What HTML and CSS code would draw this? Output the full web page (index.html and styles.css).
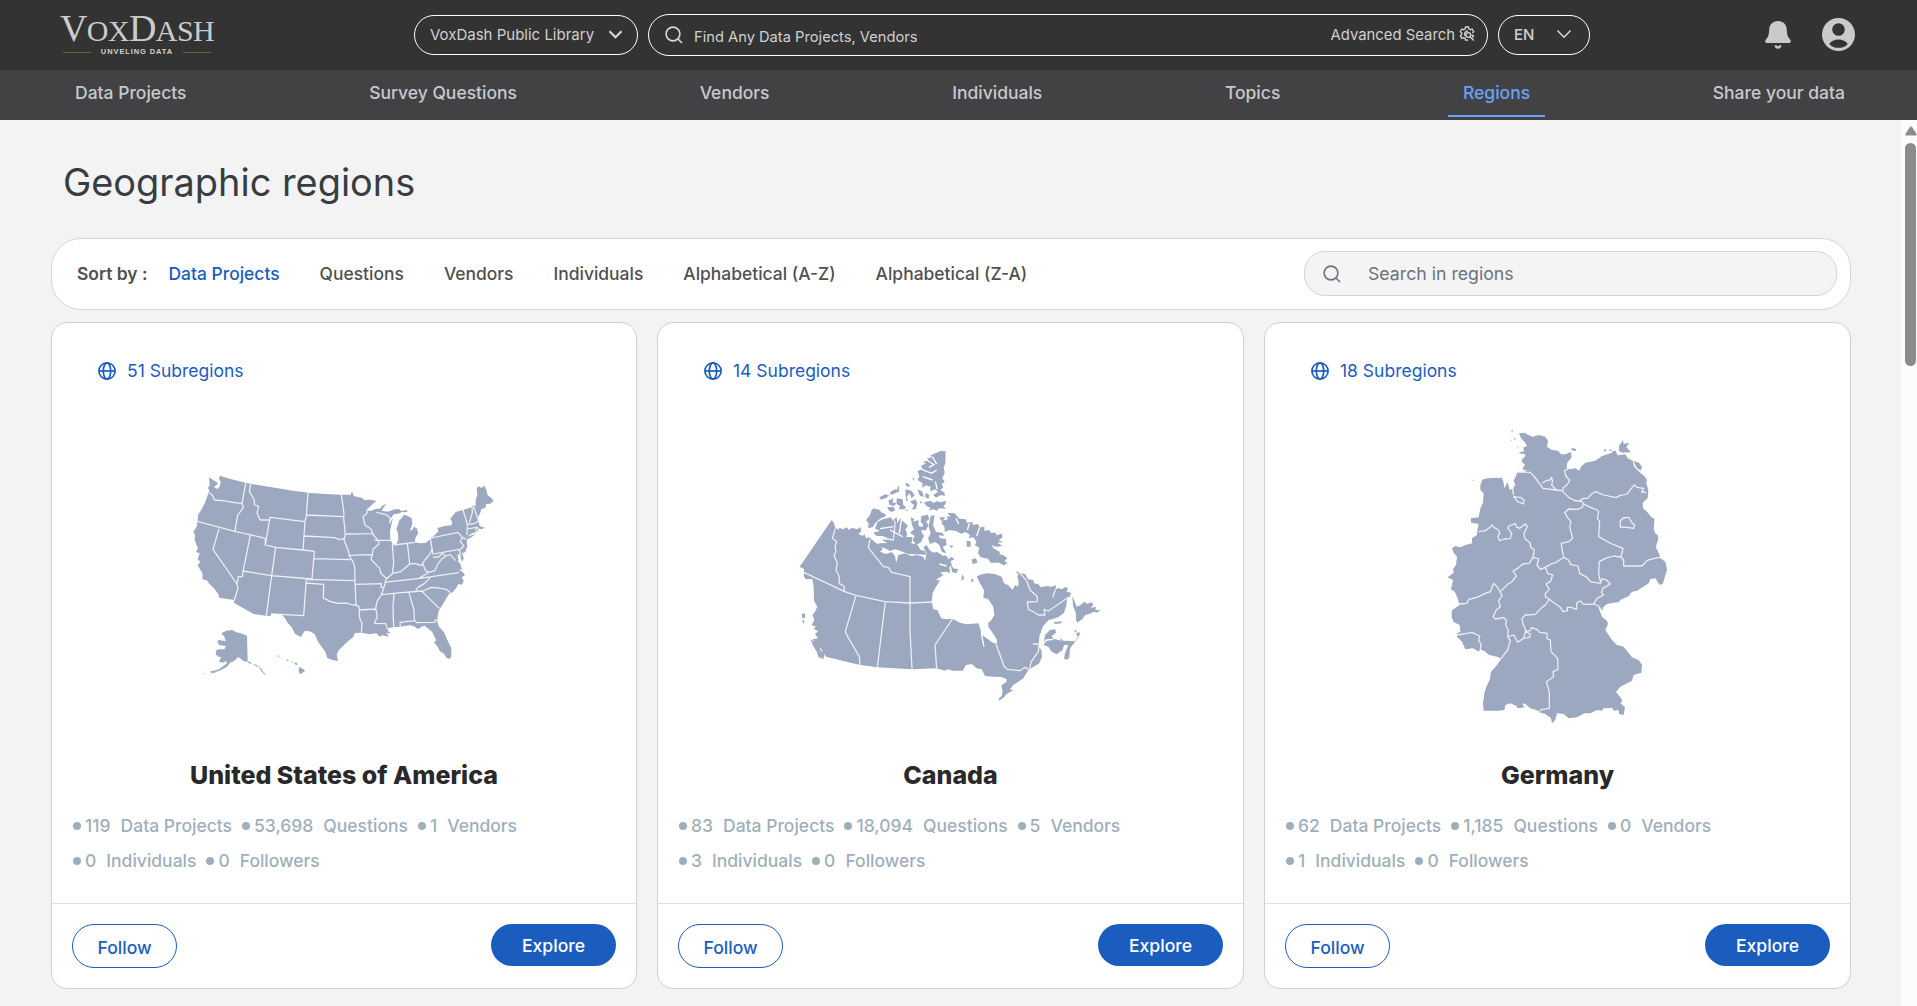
FILE: index.html
```html
<!DOCTYPE html>
<html lang="en">
<head>
<meta charset="utf-8">
<title>VoxDash - Geographic regions</title>
<link rel="stylesheet" href="styles.css">
</head>
<body>
<svg class="defs" width="0" height="0" aria-hidden="true">
  <symbol id="icon-search" viewBox="0 0 18 18"><circle cx="8" cy="8" r="6.9"/><path d="M13 13l4 4"/></symbol>
  <symbol id="icon-globe" viewBox="0 0 18 18"><circle cx="9" cy="9" r="8.1"/><ellipse cx="9" cy="9" rx="3.7" ry="8.1"/><path d="M1 9h16"/></symbol>
</svg>

<header class="topbar">
  <div class="logo">
    <div class="logo-name"><b>V</b>OX<b>D</b>ASH</div>
    <div class="logo-tag"><i></i><span>UNVELING DATA</span><i></i></div>
  </div>
  <div class="library-pill">
    <span>VoxDash Public Library</span>
    <svg width="15" height="9" viewBox="0 0 15 9"><path d="M1.5 1.2l6 6 6-6" stroke-width="2.1"/></svg>
  </div>
  <div class="search-pill">
    <svg class="search-icon" width="18" height="18"><use href="#icon-search"/></svg>
    <span class="placeholder">Find Any Data Projects, Vendors</span>
    <span class="advanced">Advanced Search</span>
    <svg class="gear" width="16" height="16" viewBox="0 0 16 16"><path d="M9.2 14.2L6.500 14.200 6.100 12.300 4.700 11.600 2.900 12.400 1.300 9.800 2.700 8.500V7L1.300 5.700 2.900 3 4.700 3.700 6.100 2.900 6.500 1h3l.4 1.900 1.400.8L13.100 3l1.600 2.700L13.400 7"/><circle cx="9.300" cy="9" r="2.300"/><path d="M11 10.700l3.800 3.800M6.600 10.200A2.600 2.600 0 0 1 6.300 6.300 2.600 2.600 0 0 1 9 5.300M12.500 8.800l2 1-1 2"/></svg>
  </div>
  <div class="lang-pill">
    <span>EN</span>
    <svg width="16" height="10" viewBox="0 0 16 10"><path d="M1.500 1.500l6.500 6.700 6.500-6.700" stroke-width="1.500"/></svg>
  </div>
  <div class="account">
    <svg width="26" height="28" viewBox="0 0 26 28"><path d="M13 0C7.600 0 4.400 3.600 4.200 8.500 4 13.500 3.400 15.800.9 18.600-.3 20 .3 22 2 22h22c1.700 0 2.300-2 1.100-3.400-2.500-2.800-3.100-5.100-3.300-10.100C21.600 3.600 18.400 0 13 0zM9.600 24.300h2a1.500 1.500 0 0 0 2.800 0h2a3.400 3.400 0 0 1-6.800 0z"/></svg>
    <svg width="33" height="33" viewBox="0 0 33 33"><path fill-rule="evenodd" d="M16.500 0a16.500 16.500 0 1 1 0 33 16.500 16.500 0 0 1 0-33zm0 5.200a6.300 6.300 0 1 0 0 12.600 6.300 6.300 0 0 0 0-12.600zM16.500 21.500c-4.200 0-7.300 1.700-9.300 4.400 2.400 2.500 5.500 3.900 9.300 3.900s6.900-1.400 9.300-3.900c-2-2.700-5.100-4.400-9.300-4.400z"/></svg>
  </div>
</header>

<nav class="mainnav">
  <a>Data Projects</a><a>Survey Questions</a><a>Vendors</a><a>Individuals</a><a>Topics</a><a class="active">Regions</a><a>Share your data</a>
</nav>

<div class="viewport">
<main class="content">
  <h1>Geographic regions</h1>
  <section class="sortbar">
    <span class="sort-label">Sort by :</span>
    <div class="sort-options"><a class="active">Data Projects</a><a>Questions</a><a>Vendors</a><a>Individuals</a><a>Alphabetical (A-Z)</a><a>Alphabetical (Z-A)</a></div>
    <div class="region-search"><svg class="search-icon" width="18" height="18"><use href="#icon-search"/></svg><span>Search in regions</span></div>
  </section>

  <section class="cards">
    <article class="card">
      <div class="subregions"><svg width="18" height="18"><use href="#icon-globe"/></svg><span>51 Subregions</span></div>
      <svg class="map" viewBox="-17 -120 1020 930">
        <path class="land" d="M88 52L104 62 112 66 114 73 103 80 112 87 120 80 123 66 118 56 121 47 150 56 200 69 240 76 290 84 340 92 385 98 435 102 485 104 514 104 515 97 520 99 522 108 545 113 555 120 572 119 590 123 575 136 560 150 572 153 590 146 600 146 608 137 621 131 612 142 606 152 625 155 645 148 660 148 665 153 682 150 683 156 665 157 655 161 642 163 632 178 630 190 640 174 635 195 631 215 632 240 640 254 650 252 656 240 655 220 650 206 655 195 658 182 668 172 672 164 685 168 696 175 698 190 695 202 690 212 698 209 703 200 711 205 716 220 708 232 705 247 722 250 738 249 755 235 768 222 776 214 773 204 795 198 815 196 818 188 812 176 828 156 850 150 875 142 880 135 888 138 888 120 893 105 891 85 897 79 905 84 915 77 920 90 924 106 932 112 942 122 932 131 920 132 917 143 905 147 902 158 896 170 895 184 899 190 897 195 905 200 914 202 908 208 898 206 893 215 877 220 862 230 888 222 875 232 863 238 861 245 863 258 857 275 851 280 846 274 851 290 852 297 847 305 843 294 838 282 833 285 838 303 832 301 842 312 847 328 838 330 849 336 856 346 846 352 852 362 847 374 836 372 832 380 820 396 808 402 800 415 785 440 777 452 774 469 773 485 778 500 793 517 803 540 815 565 815 590 808 597 800 593 793 581 781 574 774 560 763 547 770 541 763 527 757 515 735 497 726 500 715 508 704 499 690 496 662 500 640 502 622 505 627 515 635 520 620 520 628 530 608 526 600 530 590 520 570 523 545 518 526 519 520 532 500 548 478 570 471 583 475 603 458 600 443 594 437 575 427 562 415 545 405 522 390 514 375 513 363 531 346 521 337 503 322 486 318 478 305 462 275 460 273 468 258 467 222 462 162 428 165 420 118 413 116 402 105 388 90 373 83 362 68 357 69 341 54 316 62 305 54 298 60 280 49 275 55 265 45 240 46 225 41 215 51 200 54 182 55 165 66 148 76 128 86 100 89 92 85 84 90 75Z"/>
        <path class="land" d="M158 510L170 517 184 520 202 527 204 605 190 603 181 594 173 592 168 600 153 607 140 622 118 633 95 638 90 635 118 628 142 610 138 603 130 608 118 605 124 590 115 590 108 582 110 570 118 568 135 568 138 558 118 555 113 544 118 540 138 544 134 530 125 520 140 512ZM204 603L216 608 214 612 206 608ZM219 611L230 614 238 622 232 620ZM236 618L246 628 252 638 258 641 255 644 245 634ZM358 621L372 628 376 634 361 643 357 634ZM342 607L352 609 354 615 348 614ZM320 598L328 601 322 604ZM292 586L299 588 297 592ZM331 605L340 605 339 608ZM110 637L90 641 105 635ZM66 641L74 640 73 643ZM159 600L163 603 158 607Z"/>
        <path class="border" d="M88 98L98 105 105 120 130 122 160 127 187 131M198 70L187 131 191 142 180 158 174 165 166 214M55 185L166 214 257 235M213 72L209 95 217 108 223 118 225 135 237 139 232 160 242 180 268 180M257 255L271 172 376 185 370 270M257 235L257 255 288 262 370 270 404 274 397 357M385 98L380 167 376 185M381 165L492 170M374 228L465 233 480 239 492 236M485 104L493 160 492 175 497 222 493 240 505 270 510 290 520 305 525 322 526 362 529 436M497 222L578 221M562 150L562 160 550 170 556 195 575 208 581 225 596 242 598 252 580 268 578 285 574 298 600 325 603 340 620 355 616 372 605 405 592 425 588 445 593 470 584 490 618 491 622 505M585 241L633 241M508 286L576 284M590 157L620 164 632 175 630 190M402 296L512 299M380 358L526 362M118 206L100 268 172 372 175 385 164 420M212 226L190 335 188 350 176 350 172 372M190 333L276 347 397 357M288 262L276 347 260 467M380 358L372 467 305 463M379 369L432 373 431 415 440 418 450 424 475 430 500 429 515 434 530 436M530 436L538 440 540 475 547 490 545 518M527 373L605 371 604 382 614 382M539 450L590 447M643 402L640 440 642 500M688 398L703 450 704 482M604 404L665 398 730 393M614 367L720 355 838 338M662 500L661 487 706 482 711 488 765 487 767 480 774 481M752 352L735 370 715 382 708 392M730 393L755 382 778 384 800 388 812 398M725 392L745 412 779 445M638 252L642 310 638 340M620 357L640 340 665 334 690 312 705 310 725 317 730 308 738 297 750 284 757 266M683 250L690 312M642 255L705 247M752 235L760 282 840 268M755 234L835 217 848 232 860 238M848 232L842 245 853 258 840 270M728 308L737 330 745 338 765 332 775 312 785 298 798 288 790 280 776 291 760 292M745 334L740 342 718 355M798 288L812 284 828 302M838 268L844 290M850 150L858 175 863 195 862 225M877 140L878 158 869 188M880 135L896 180M862 194L886 190 897 183M862 207L891 202 898 208M888 205L891 215"/>
      </svg>
      <h2>United States of America</h2>
      <ul class="stats"><li><b>119</b>Data Projects</li><li><b>53,698</b>Questions</li><li><b>1</b>Vendors</li><li><b>0</b>Individuals</li><li><b>0</b>Followers</li></ul>
      <footer class="actions"><button class="follow">Follow</button><button class="explore">Explore</button></footer>
    </article>

    <article class="card">
      <div class="subregions"><svg width="18" height="18"><use href="#icon-globe"/></svg><span>14 Subregions</span></div>
      <svg class="map" viewBox="3 -30 1020 930">
        <path class="land" d="M155 270L162 280 165 292 175 300 178 293 189 298 200 292 207 300 215 293 232 298 241 291 244 303 235 312 248 318 253 312 258 325 268 322 285 337 300 345 308 358 300 365 318 372 335 366 345 378 349 398 355 375 375 370 395 378 410 375 430 380 435 392 440 370 430 352 440 345 450 362 462 368 470 365 490 378 498 376 505 388 515 380 524 388 512 393 515 405 508 412 510 430 500 425 480 427 490 436 468 449 480 452 468 470 458 490 455 515 460 538 472 540 484 565 500 568 518 566 540 578 560 583 595 580 602 600 603 613 620 625 636 637 650 642 651 630 640 612 625 590 625 578 633 572 643 555 640 530 625 508 610 503 612 480 600 460 590 440 600 434 620 430 645 432 665 440 672 460 685 466 698 480 705 465 714 470 716 455 712 440 716 428 735 432 745 448 760 450 762 460 775 463 783 472 800 468 815 470 828 466 826 480 835 474 845 478 855 471 864 474 860 485 873 488 870 500 862 505 858 530 852 548 835 562 805 571 788 590 778 620 776 650 784 660 786 680 778 700 745 720 730 745 700 765 690 778 700 781 680 792 672 802 658 812 656 806 665 798 668 785 664 765 679 757 680 748 665 741 640 740 615 738 605 718 590 715 575 702 558 705 548 722 520 722 503 718 495 722 470 715 395 718 292 712 240 705 138 680 122 655 108 645 98 628 114 625 105 612 115 603 100 597 108 590 95 585 103 570 97 555 105 545 112 530 102 512 101 470 97 447 78 448 72 440 72 417 59 410Z"/>
        <path class="land" d="M470 68L482 63 497 64 496 100 491 112 494 128 487 145 494 155 485 163 490 172 481 180 494 188 494 198 482 195 468 203 460 195 474 185 466 178 450 184 452 170 438 166 426 173 428 160 412 150 418 140 413 122 428 118 423 108 438 100 428 97 445 90 440 86 455 82 452 76ZM438 215L452 212 460 219 470 214 482 217 497 212 497 222 490 228 498 236 478 235 470 242 460 238 445 242 452 234 440 229 432 218ZM298 202L316 193 328 196 318 204 303 209ZM325 212L340 205 338 218 350 218 342 228 328 224ZM332 185L345 178 358 182 342 192 330 194ZM353 170L358 168 356 187 350 187ZM378 158L390 165 386 172 376 165ZM376 178L394 182 404 196 395 205 388 190 380 202 384 212 378 212ZM390 215L406 208 412 218 408 236 396 240 402 225ZM397 145L403 144 402 152ZM412 178L426 184 432 200 420 198ZM350 205L368 208 370 226 378 230 374 238 356 238 360 228 350 222ZM322 232L340 230 346 240 334 246 326 240ZM436 188L448 194 446 206 436 202ZM418 213L426 216 423 222ZM380 238L384 243 378 243Z"/>
        <path class="land" d="M280 235L298 239 304 247 316 252 318 258 300 266 286 279 278 292 264 294 266 280 258 270 270 255 274 243ZM292 277L308 268 322 265 332 262 345 278 342 268 350 262 352 280 360 266 372 276 384 288 376 298 382 312 378 320 398 322 394 340 412 344 422 360 434 362 440 374 385 372 360 362 345 358 330 363 315 355 300 350 296 340 322 339 306 330 328 326 308 318 290 318 280 308 300 302 285 296ZM392 262L402 266 400 275 415 270 416 288 430 292 424 305 432 318 422 338 408 344 398 330 404 318 390 308 402 298 396 285ZM424 258L444 254 448 268 438 275 446 286 436 302 424 298 430 284 422 276ZM452 258L464 256 459 285 468 306 488 308 492 318 476 316 480 325 497 326 500 345 488 350 499 370 486 366 478 345 466 336 450 342 444 325 452 310 446 290ZM478 262L496 262 484 278 494 292 494 306 508 300 528 303 544 311 556 306 570 314 566 324 580 322 590 336 584 345 598 353 594 368 602 382 624 386 632 398 656 398 672 406 682 400 674 392 682 384 670 376 658 372 660 366 642 356 634 346 650 350 668 348 652 338 668 336 656 330 668 322 666 311 648 316 648 308 632 308 628 300 612 302 614 292 598 290 594 282 578 285 578 276 560 278 558 268 538 266 524 250 502 248 512 260 500 258 504 268 484 272ZM560 332L572 334 572 350 560 350ZM575 388L588 385 592 398 578 403ZM512 402L520 415 535 418 528 430 516 425ZM544 452L547 432 553 446ZM572 446L582 450 576 458ZM508 345L520 348 514 355Z"/>
        <path class="land" d="M876 498L884 515 890 530 900 526 914 515 922 522 934 516 940 524 932 534 948 530 946 540 962 541 950 548 940 545 934 550 915 556 908 566 892 578 888 570 888 550 880 530ZM792 635L795 615 810 600 826 598 828 608 815 618 820 626 845 632 838 620 850 632 885 634 894 620 888 612 897 605 900 612 890 630 880 642 870 655 868 682 862 689 852 686 855 670 865 645 852 645 848 660 830 673 815 665 805 650 790 645ZM820 577L846 574 844 580 826 582ZM92 628L105 637 118 648 122 662 134 668 130 688 115 680 110 665 98 645ZM66 550L76 552 74 565 66 563ZM66 570L74 572 70 582ZM882 602L890 600 888 608ZM708 426L716 424 712 432Z"/>
        <path class="border" d="M166 295L157 325 170 335 165 348 168 365 162 375 172 400 168 420 178 440 177 460 192 468 193 485M72 427L194 485 228 496 315 515 390 519 457 516M346 275L340 330 302 324M270 328L265 353 310 410 325 412 335 427 390 440 390 600 396 718M228 496L196 605 207 627 238 680 240 705M316 515L292 712M518 566L465 645 470 715M648 642L672 708 682 718 720 722 735 712 745 718M748 718L754 695 775 665 778 642 758 642M720 430L740 452 750 480 772 500 772 515 742 516 745 538 762 546 775 555 795 555 792 538 805 543 868 500M826 480L818 502"/>
        <path class="inlet" d="M440 90L462 104 447 112M425 118L455 130 470 120M428 140L458 150M457 80L470 102M466 155L472 178M364 270L358 310M330 300L368 320M300 296L340 290M528 265L536 282M568 280L562 300M600 290L590 318M478 402L500 408M782 650L800 630 820 628M612 650L604 612"/>
      </svg>
      <h2>Canada</h2>
      <ul class="stats"><li><b>83</b>Data Projects</li><li><b>18,094</b>Questions</li><li><b>5</b>Vendors</li><li><b>3</b>Individuals</li><li><b>0</b>Followers</li></ul>
      <footer class="actions"><button class="follow">Follow</button><button class="explore">Explore</button></footer>
    </article>

    <article class="card">
      <div class="subregions"><svg width="18" height="18"><use href="#icon-globe"/></svg><span>18 Subregions</span></div>
      <svg class="map" viewBox="-127 0 1020 930">
        <path class="land" d="M266 40L282 38 290 43 308 50 325 45 345 50 353 62 350 80 364 90 383 92 392 103 405 103 422 96 424 112 411 128 408 145 418 148 435 145 447 152 452 140 465 128 495 122 515 108 545 98 548 93 556 93 562 106 585 103 592 115 607 122 611 140 634 162 642 168 650 180 648 190 654 210 652 235 637 248 638 265 650 275 662 290 673 298 670 325 674 340 682 345 684 358 676 380 688 405 688 413 705 425 710 450 705 465 698 490 690 495 682 487 676 475 660 477 655 490 620 512 605 515 595 528 570 540 565 547 550 548 530 552 520 560 515 572 503 558 515 590 530 602 533 612 525 630 545 660 560 675 580 680 605 712 625 720 635 735 633 758 610 765 605 782 570 800 557 815 572 835 576 843 570 850 584 862 580 885 566 882 565 870 550 872 545 863 520 865 515 872 500 870 480 880 462 880 440 892 415 895 400 882 380 880 375 900 365 910 362 895 345 882 330 878 318 870 300 865 285 852 275 850 283 862 262 865 258 858 240 850 225 855 222 870 205 872 160 872 158 850 162 820 168 800 178 780 182 755 200 735 212 718 205 712 175 704 165 695 150 688 145 695 128 685 105 688 95 665 80 650 80 640 90 635 88 615 70 606 64 592 64 572 80 560 88 555 80 530 73 515 62 508 68 480 52 472 70 458 68 447 77 435 80 410 70 398 65 385 75 378 90 382 105 375 125 370 125 355 140 345 142 325 145 312 122 308 122 295 145 292 150 265 158 248 160 220 150 210 150 195 157 178 180 174 215 173 220 188 222 205 232 186 238 210 248 205 255 195 250 182 262 156 275 157 290 152 276 148 284 133 276 128 275 118 286 108 283 102 265 100 270 96 282 94 278 83 290 78 285 68 272 55ZM566 78L578 60 580 72 596 68 588 82 602 97 575 98 566 92ZM423 84L436 86 438 92 425 92ZM609 122L626 128 635 140 631 152 618 142ZM242 34L248 27 246 36ZM243 63L240 58 245 61ZM248 54L257 56 256 60ZM260 80L266 79 263 83ZM519 90L528 87 526 95ZM534 90L545 88 543 94ZM126 180L132 182 127 183ZM167 172L174 170 173 172ZM194 168L199 167 199 169Z"/>
        <path class="border" d="M262 156L300 157 312 170 325 188 338 205 375 210 395 212 415 232 430 240 455 245 460 252 480 262 500 270 505 275 501 295 508 305 505 350 545 372 565 380 578 385 572 410M336 190L347 182 360 180 363 172 367 182 364 195 378 210M412 148L402 152 407 168 418 182 410 195 398 203 398 212M430 242L445 243 460 235 472 235 484 222 497 215 520 225 558 233 568 227 590 222 603 205 612 195 620 202 640 205 634 216 648 218M460 250L455 263 440 268 415 267 403 278 412 293 422 305 418 320 427 355 415 365 393 370 395 388 400 410M250 230L272 233 281 240 279 252 268 247 262 245ZM250 190L247 212 250 225M570 303L578 294 595 292 600 300 606 310 613 315 610 325 590 322 570 321ZM145 335L165 332 175 325 185 315 190 322 205 330 208 340 202 350 208 362 222 357 240 356 244 340 233 325 235 318 255 311 258 320 268 325 285 312 291 320 281 340 283 355 300 370 301 382 312 390 308 412 297 430 278 432 262 445 248 453 258 468 245 485 232 493 212 513M308 412L325 417 320 435 330 448 345 442 362 432 375 428 400 412M85 552L110 550 115 538 140 532 165 520 180 515 190 490 200 500 212 520 215 528 205 542 210 560 198 570 188 590 195 597 220 593 228 600 226 615 234 630 232 650 240 662 232 690 212 716M345 442L352 460 367 465 360 485 347 492 357 508 345 520 345 530 357 538M400 412L415 420 420 433 443 438 448 460 470 472 480 485 510 490 515 476 528 480 540 492 518 505 513 518 520 525 500 535 490 552M510 485L505 460 507 425 525 415 550 408 575 412M572 410L580 420 580 438 635 438 650 422 660 418 688 412M357 538L372 550 390 562 398 575 412 572 410 562 422 562 438 568 440 548 450 543 460 553 490 552 505 558 515 573M357 538L345 555 332 565 315 583 285 585 275 595 278 612 286 630 280 655M233 650L250 645 256 655 262 667 280 655 298 652 300 642 285 635 300 632 303 623 320 628 328 637 350 640 350 655 360 660 362 695 382 715 383 748 368 755 370 770 348 785 352 798 357 815 357 865 335 868 322 876M80 645L100 642 125 637 148 648 145 662 152 672 150 690"/>
      </svg>
      <h2>Germany</h2>
      <ul class="stats"><li><b>62</b>Data Projects</li><li><b>1,185</b>Questions</li><li><b>0</b>Vendors</li><li><b>1</b>Individuals</li><li><b>0</b>Followers</li></ul>
      <footer class="actions"><button class="follow">Follow</button><button class="explore">Explore</button></footer>
    </article>
  </section>
</main>
<div class="scrollbar"><svg width="12" height="10" viewBox="0 0 12 10"><path d="M6 0.500Q6.700 0.500 7.200 1.300L11.600 8Q12 9.500 10.800 9.500H1.200Q0 9.500 .4 8L4.800 1.300Q5.300 .5 6 .5z"/></svg><div class="thumb"></div></div>
</div>
</body>
</html>
```
FILE: styles.css
```css
* { box-sizing: border-box; }
body {
  margin: 0;
  height: 1006px;
  overflow: hidden;
  display: flex;
  flex-direction: column;
  background: #f3f3f3;
  font-family: Inter, "Liberation Sans", sans-serif;
  font-size: 17.6px;
}
svg { display: block; flex: none; }
.defs { position: absolute; }

/* Top bar */
.topbar {
  height: 70px;
  flex: none;
  display: flex;
  align-items: flex-start;
  padding: 14px 62px 0 60px;
  background: #333;
  color: #d0d0d0;
  font-size: 15px;
  white-space: nowrap;
}
.topbar svg { fill: none; stroke: #d8d8d8; }
.logo { width: 354px; }
.logo-name {
  margin-top: -1px;
  font-family: "Liberation Serif", serif;
  font-size: 30px;
  line-height: 30px;
  height: 30px;
  letter-spacing: -0.6px;
  color: #cbcbcb;
}
.logo-name b { font-size: 38px; font-weight: 400; }
.logo-tag {
  width: 148px;
  margin: 5px 0 0 3px;
  display: flex;
  align-items: center;
  justify-content: space-between;
  font: bold 7.5px/8px "Liberation Sans", sans-serif;
  letter-spacing: 0.9px;
}
.logo-tag i { width: 28px; height: 1px; background: #75602c; }
.library-pill, .lang-pill, .search-pill {
  display: flex;
  align-items: center;
  border: 1px solid #fff;
  border-radius: 21px;
}
.library-pill {
  width: 224px;
  height: 40px;
  margin: 1px 10px 0 0;
  padding: 0 14px 2px 15px;
  justify-content: space-between;
}
.search-pill { width: 840px; height: 42px; padding: 0 12px 0 16px; }
.search-icon { stroke-width: 1.6; }
.search-pill .placeholder { margin: 3px auto 0 11px; font-size: 14.7px; }
.search-pill .advanced { margin: -1px 4px 0 0; font-size: 14.85px; }
.search-pill .gear { stroke-width: 1.3; margin-top: -2px; }
.lang-pill {
  width: 92px;
  height: 40px;
  margin: 1px 0 0 10px;
  padding: 0 17px 2px 15px;
  justify-content: space-between;
  font-weight: 500;
}
.account { display: flex; align-items: center; gap: 31px; margin: 4px 0 0 auto; }
.topbar .account svg { fill: #cacaca; stroke: none; }

/* Main navigation */
.mainnav {
  height: 50px;
  flex: none;
  display: flex;
  justify-content: space-between;
  align-items: flex-start;
  padding: 0 57px 0 60px;
  background: #424244;
  color: #c6c9cd;
  font-size: 17.5px;
  font-weight: 500;
}
.mainnav a { height: 47px; padding: 0 15px; line-height: 46px; border-bottom: 2px solid transparent; }
.mainnav .active { color: #6ba2f5; border-color: #6ba2f5; }

/* Page */
.viewport { flex: 1; display: flex; min-height: 0; }
.content { flex: 1; padding: 38px 50px 0 51px; }
h1 {
  margin: 0 0 32px 12px;
  font-size: 37.9px;
  line-height: 48px;
  font-weight: 400;
  color: #373d42;
}
.sortbar {
  height: 72px;
  display: flex;
  align-items: center;
  padding: 0 13px 0 25px;
  border: 1px solid #d5d5d5;
  border-radius: 30px;
  background: #fff;
  color: #505050;
  font-size: 17.45px;
  font-weight: 500;
}
.sort-label { font-weight: 600; margin: -2px 21px 0 0; }
.sort-options { display: flex; gap: 40px; margin-top: -2px; }
.sort-options .active { color: #1b5dbf; }
.region-search {
  width: 533px;
  height: 45px;
  margin: -1px 0 0 auto;
  display: flex;
  align-items: center;
  gap: 27px;
  padding-left: 18px;
  border: 1px solid #d1d4da;
  border-radius: 21px;
  background: #f4f4f4;
  color: #6b7280;
  font-size: 17.7px;
  font-weight: 400;
}
.region-search svg { fill: none; stroke: #6b7280; }

/* Region cards */
.cards { display: grid; grid-template-columns: 586px 587px 587px; gap: 20px; margin-top: 12px; }
.card {
  height: 667px;
  display: flex;
  flex-direction: column;
  align-items: center;
  border: 1px solid #d0d0d0;
  border-radius: 16px;
  background: #fff;
}
.subregions {
  align-self: flex-start;
  display: flex;
  align-items: center;
  gap: 11px;
  height: 22px;
  margin: 37px 0 0 46px;
  color: #1b5dbf;
  font-size: 17.5px;
}
.subregions span { margin-top: -2px; }
.subregions svg { fill: none; stroke: #1b5dbf; stroke-width: 1.7; }
.map { width: 340px; height: 310px; margin-top: 38px; }
.land { fill: #9ba8bf; }
.border { fill: none; stroke: #edf0f4; stroke-width: 3.8; stroke-linejoin: round; }
.inlet { fill: none; stroke: #fff; stroke-width: 4; }
h2 { margin: 30px 0 0; font-size: 25px; line-height: 30px; font-weight: 800; color: #292929; }
.stats {
  align-self: stretch;
  display: flex;
  flex-wrap: wrap;
  column-gap: 10px;
  margin: 18px 90px 0 21px;
  padding: 0;
  list-style: none;
  line-height: 35px;
  color: #9fafba;
  font-size: 17.5px;
  font-weight: 500;
}
.stats li { display: flex; align-items: center; white-space: nowrap; }
.stats li::before { content: ""; width: 8px; height: 8px; margin: 0 4px 0 0; border-radius: 50%; background: #9fafba; }
.stats b { font-weight: 500; margin-right: 10px; }
.actions {
  align-self: stretch;
  flex: 1;
  display: flex;
  justify-content: space-between;
  align-items: flex-start;
  margin-top: 25px;
  padding: 20px 20px 0;
  border-top: 1px solid #e0e0e0;
}
button { font: 500 17.6px/20px Inter, sans-serif; border-radius: 22px; }
.follow { width: 105px; height: 44px; padding: 3px 0 0; border: 1px solid #1b5dbf; background: #fff; color: #1b5dbf; }
.explore { width: 125px; height: 42px; padding: 1px 0 0; border: 0; background: #1b5dbf; color: #fff; }

/* Scroll track */
.scrollbar {
  width: 16px;
  padding: 6px 0 0 4px;
  display: flex;
  flex-direction: column;
  gap: 7px;
  background: #fcfcfc;
}
.scrollbar svg { fill: #8b8b8b; }
.thumb { width: 11px; height: 223px; border-radius: 6px; background: #8b8b8b; }
```
